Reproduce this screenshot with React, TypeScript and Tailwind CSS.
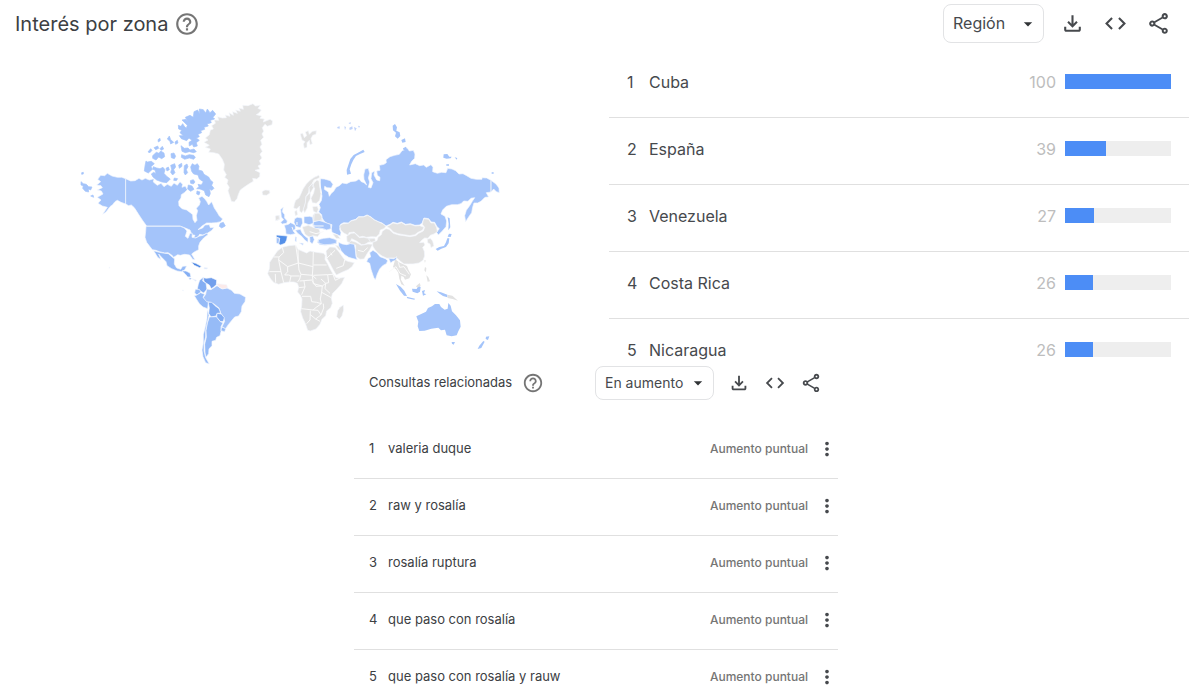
import { useState } from "react";
import {
  MdArrowDropDown,
  MdCode,
  MdHelpOutline,
  MdMoreVert,
  MdOutlineFileDownload,
  MdOutlineShare,
} from "react-icons/md";

const regions = [
  { name: "Cuba", value: 100 },
  { name: "España", value: 39 },
  { name: "Venezuela", value: 27 },
  { name: "Costa Rica", value: 26 },
  { name: "Nicaragua", value: 26 },
];

const queries = [
  "valeria duque",
  "raw y rosalía",
  "rosalía ruptura",
  "que paso con rosalía",
  "que paso con rosalía y rauw",
];

const LIGHT = "#a4c4fa";
const MEDIUM = "#96bbf7";
const STRONG = "#84aef3";
const SPAIN = "#5590e8";
const EMPTY = "#e2e2e2";
const COAST = "#f4f7fd";

// every tile has its own origin on the map, its paths are drawn at 3x
const tiles = [
  {
    id: "north-america",
    x: 70,
    y: 90,
    stroke: COAST,
    shapes: [
      // Alaska
      { fill: LIGHT, d: "M83 268L92 256L104 257L112 250L126 258L142 262L155 262L167 266V342L153 337L142 331L135 335L128 344L120 350L108 366L98 373L112 352L97 348L84 340L93 330L82 322L99 312L94 303L82 300L97 293L93 287L80 285L92 275Z" },
      // Canada
      { fill: LIGHT, d: "M167 266L182 273L195 272L207 265L216 270L226 265L238 270L252 266L250 276L262 286L273 280L282 290L292 283L304 289L312 279L322 286L330 275L338 283L336 292L346 288L352 299L343 308L334 314L333 324L326 334L327 347L336 356L350 360L361 368L368 374L369 388L375 398L381 391L379 377L383 362L379 355L388 345L391 335L386 324L396 319L404 326L410 334L416 345L425 335L429 344L433 354L441 366L448 378L458 387L452 395L439 398L424 399L410 399L396 408L384 419L398 414L405 405L418 404L421 413L432 412L426 421L412 430L399 435L389 433L384 441L370 446L375 436L366 434L360 420L348 415L338 411L330 408H230L219 393L209 378L200 364L193 353L184 345L176 347L167 342Z" },
    ],
  },
  {
    id: "arctic-islands",
    x: 70,
    y: 90,
    stroke: LIGHT,
    shapes: [
      { fill: LIGHT, d: "M33 275L40 281L49 283L56 290L66 291L62 300L55 297L56 306L46 304L38 295L40 288L33 285ZM35 248L40 247V252L35 253ZM62 318L69 315L71 322Z" },
      { fill: LIGHT, d: "M451 400L460 397L466 408L455 414L448 409ZM355 285L366 288L372 298L362 304L353 297ZM381 303L390 306L387 315L380 312Z" },
      { fill: LIGHT, d: "M228 213L232 216L244 214L253 221L243 230L247 238L235 249L223 243L225 228ZM250 230L260 234L270 236L279 232L285 239L282 250L289 258L301 267L290 278L276 276L260 270L249 261L244 252L251 247L258 251L255 240L248 238Z" },
      { fill: LIGHT, d: "M234 186L242 176L246 181L240 188ZM248 197L259 187L267 190L272 183L282 189L284 200L275 206L266 201L258 210L248 205ZM252 173L263 168L266 175L257 179ZM270 176L277 169L281 177L274 181ZM264 149L270 145L271 152L265 156ZM292 147L298 138L302 149L311 157L302 162L300 154ZM315 156L322 151L324 159L317 163Z" },
      { fill: LIGHT, d: "M303 191L312 189L317 199L313 206L304 203ZM288 235L295 231L298 239L291 243ZM302 226L314 221L317 231L311 239L315 248L308 255L302 247L305 238ZM313 264L323 266L319 272L311 271ZM326 225L335 220L336 229L328 235Z" },
      { fill: LIGHT, d: "M333 167L343 175L354 174L360 180L372 177L379 185L371 188L358 185L346 188L336 184ZM335 194L346 198L358 194L371 196L376 202L371 208L358 204L344 208L334 202Z" },
      { fill: LIGHT, d: "M325 106L333 109L338 101L343 109L349 115L352 106L345 99L336 90L348 88L354 95L346 82L360 76L370 82L372 65L383 60L389 71L388 57L400 59L407 69L412 57L420 68L428 61L437 72L429 82L434 87L421 91L424 98L411 102L415 108L402 112L404 118L392 122L395 128L384 133L388 140L379 144L388 151L379 158L382 168L371 171L367 163L358 168L357 157L366 151L357 144L350 152L334 146L328 137L340 137L330 128L335 121L326 117Z" },
      { fill: LIGHT, d: "M343 227L351 222L354 230L349 239L353 248L346 255L342 248ZM362 231L367 221L375 226L382 221L387 229L385 240L397 243L402 253L416 261L421 270L429 277L425 286L432 295L426 301L419 298L421 311L417 320L407 315L403 302L390 297L380 296L387 290L384 283L394 285L400 275L388 267L384 255L371 252L365 244ZM361 272L370 269L375 276L370 282L362 280Z" },
    ],
  },
  {
    id: "greenland",
    x: 180,
    y: 90,
    stroke: COAST,
    shapes: [
      { fill: EMPTY, d: "M72 157L84 150L76 144L88 134L91 120L100 117L95 107L106 100L103 90L116 91L113 80L127 84L139 83L136 75L150 79L147 68L160 76L158 65L172 70L167 60L181 64L177 54L190 58L188 46L204 47L219 41L226 48L241 46L234 55L244 60L237 69L229 74L245 78L240 85L253 87L250 96L270 88L278 93L276 104L262 109L255 103L247 113L251 124L246 132L251 142L242 151L246 163L240 171L247 184L240 193L246 204L238 212L243 223L234 228L240 237L225 241L240 248L239 260L230 267L218 265L220 274L205 283L192 292L181 300L176 311L171 326L163 336L154 334L149 318L144 302L148 292L141 281L144 270L134 262L139 254L131 240L133 223L127 208L116 192L101 188L86 187L91 177L76 172L88 166Z" },
      { fill: EMPTY, d: "M246 305L255 300L268 301L270 309L260 316L248 315ZM361 132L368 130L373 143L380 137L376 126L385 122L388 133L397 124L409 122L408 133L398 136L393 146L397 161L390 164L388 151L381 158L381 172L373 175L370 162L375 155L366 150Z" },
      // Scandinavia
      { fill: EMPTY, d: "M343 342L347 331L357 324L363 311L369 297L379 282L391 270L403 262L416 256L420 262L411 267L402 270L396 281L388 291L386 307L378 320L377 338L371 358L365 369L359 363L359 348L350 357L341 354Z" },
      { fill: EMPTY, d: "M402 279L411 270L417 273L419 289L423 311L419 331L409 340L397 338L393 325L401 309L404 294L397 289ZM370 359L376 339L378 320L389 309L387 292L398 280L402 291L391 309L391 326L384 339L382 354L374 369ZM398 350L412 349L415 358L411 369L400 364Z" },
      { fill: EMPTY, d: "M399 374L414 369L424 378L428 391L414 397L398 394ZM289 378L298 376L300 388L291 392ZM344 365L350 360L353 374L346 377Z" },
    ],
  },
  {
    id: "eurasia",
    x: 300,
    y: 100,
    stroke: COAST,
    shapes: [
      // Russia
      { fill: LIGHT, d: "M61 236L73 237L91 242L99 253L94 264L81 263L74 259L73 268L85 276L88 289L94 280L101 274L108 262L118 257L127 249L140 251L152 245L168 243L177 237L184 245L192 248L200 255L192 238L191 225L195 207L205 205L209 220L205 234L209 246L205 262L213 264L219 248L213 236L215 218L224 213L222 225L230 240L239 242L240 232L232 226L230 213L240 211L238 196L252 193L259 188L258 179L270 170L284 166L298 163L306 152L314 149L321 143L328 153L340 151L345 162L344 175L335 184L329 195L346 191L359 197L371 195L379 202L393 194L399 202L398 215L412 220L425 217L438 218L443 205L456 207L467 212L477 222L489 221L500 227L513 235L529 238L546 238L546 233L560 234L573 241L588 252L597 264L598 278L589 275L581 267L573 276L559 278L566 291L555 292L543 304L533 309L522 309L518 322L515 338L506 351L497 365L494 347L499 331L509 317L517 304L524 293L513 295L504 304L491 303L483 311L472 314L455 314L439 319L428 330L423 342L435 349L440 363L438 380L427 393L415 405L410 397L418 386L411 380L404 367L394 366L386 356L372 354L366 370L358 375L345 376L331 371L317 373L304 366L292 370L279 367L270 373L258 378L246 369L235 365L223 359L213 351L201 345L190 350L176 350L167 358L153 362L145 369L131 368L122 373L119 388L123 398L121 408L109 403L96 397L94 385L96 374L82 371L72 363L66 353L65 344L56 336L61 323L57 313L64 302L66 288L61 264Z" },
      // Kazakhstan and Central Asia
      { fill: EMPTY, d: "M119 377L129 371L145 370L153 363L168 359L176 351L190 351L203 346L213 352L223 360L236 366L248 371L258 379L252 386L241 390L238 402L229 411L215 410L200 412L187 409L179 411L162 396L147 398L145 406L131 399L122 390Z" },
      { fill: EMPTY, d: "M140 409L153 400L164 399L178 413L192 412L205 415L223 414L221 425L205 427L195 433L185 434L171 424L155 416L150 428L141 425Z" },
      { fill: EMPTY, d: "M145 431L153 422L166 426L184 436L204 432L218 433L209 450L202 460L192 477L180 478L169 470L167 452L167 435ZM206 417L225 415L226 425L212 427Z" },
      // Mongolia
      { fill: EMPTY, d: "M261 380L270 375L279 369L292 372L305 368L316 375L331 373L346 378L359 377L372 382L367 391L354 397L345 404L330 407L311 404L294 401L280 396L271 386Z" },
      // China
      { fill: EMPTY, d: "M218 427L231 422L234 412L244 404L247 394L258 386L267 388L280 400L296 405L311 407L330 410L347 407L356 400L370 393L374 382L367 373L371 356L386 358L393 369L403 369L410 383L412 395L402 402L391 406L384 415L374 414L365 421L359 428L371 427L375 435L368 442L373 454L374 468L369 481L357 489L339 492L325 492L312 492L304 486L291 475L276 474L261 475L246 468L233 458L225 449L218 438Z" },
      { fill: EMPTY, d: "M382 418L391 415L398 423L402 438L393 443L390 432L383 428Z" },
      // Turkey, Iran, India
      { fill: LIGHT, d: "M54 419L70 416L86 414L101 416L111 421L109 431L92 434L75 436L59 434L53 427Z" },
      { fill: LIGHT, d: "M116 427L127 432L140 434L151 431L163 433L166 449L168 470L172 479L156 475L146 472L134 464L124 453L116 442Z" },
      { fill: LIGHT, d: "M209 458L219 451L230 458L240 470L256 476L263 482L259 491L248 497L239 507L232 522L226 540L221 532L213 508L209 490L200 485L204 475L212 471Z" },
      { fill: LIGHT, d: "M266 475L282 476L290 470L288 481L278 484L272 489ZM38 368L54 365L67 365L81 371L94 375L92 386L78 390L65 386L50 386L39 379Z" },
    ],
  },
  {
    id: "eurasia-islands",
    x: 300,
    y: 100,
    stroke: "none",
    shapes: [
      { fill: LIGHT, d: "M141 224L140 210L146 192L151 177L161 165L174 158L190 149L194 156L180 162L168 168L160 180L154 193L149 208L153 221ZM278 77L285 72L291 82L289 92L299 97L301 108L293 116L285 109L288 98L279 91ZM304 120L315 115L317 126L307 128ZM309 145L318 140L321 149L311 151ZM431 163L442 162L448 170L455 170L452 175L440 176L430 173ZM464 172L472 174L470 179ZM439 193L447 193V197L439 197ZM575 217L581 217V221L575 221Z" },
      { fill: "#c0d3fa", d: "M112 81L119 79V86L112 85ZM133 79L138 81L135 91ZM145 69L153 67L151 73ZM148 83L157 79L158 87L149 90ZM162 81L170 85L165 94ZM174 77L180 79L177 84Z" },
      // Japan
      { fill: LIGHT, d: "M447 401L455 402L452 411L443 410ZM407 447L418 441L432 438L438 427L442 415L448 415L446 430L438 441L424 446L413 452ZM443 352L449 355L451 382L445 391L446 371Z" },
    ],
  },
  {
    id: "south-america",
    x: 70,
    y: 210,
    stroke: COAST,
    shapes: [
      // United States
      { fill: LIGHT, d: "M228 49H331L343 54L351 63L346 79L354 85L360 70L367 70L366 82L377 84L389 78L399 76L411 69L414 74L401 84L390 97L386 108L386 119L373 126L365 132L375 149L368 148L359 135L344 133L331 136L323 134L311 142L305 135L294 128L284 129L268 125L258 121L247 119L239 109L230 97L225 82L227 64Z" },
      // Mexico
      { fill: MEDIUM, d: "M251 122L268 127L284 130L295 131L304 139L314 147L313 162L320 174L332 178L338 169L350 168L344 180L334 185L321 183L305 176L291 167L288 155L275 142L266 132L273 149L263 142Z" },
      // Central America and Cuba
      { fill: STRONG, d: "M336 183L348 183L360 189L363 201L353 201L345 191ZM356 203L365 205L360 210Z" },
      { fill: "#4b86e2", d: "M364 157L377 160L394 169L389 173L373 166Z" },
      { fill: "#d8e4fb", d: "M367 206L380 211L376 214ZM403 172L414 174L411 177L402 177ZM117 171L120 173L118 175ZM337 241L340 240V243Z" },
      // Colombia, Venezuela, Ecuador, Peru
      { fill: STRONG, d: "M389 211L400 202L398 213L408 219L411 238L401 249L391 243L382 236L385 223Z" },
      { fill: "#729fec", d: "M400 203L409 205L424 203L440 210L439 224L430 232L424 236L418 225L408 219L402 214Z" },
      { fill: MEDIUM, d: "M376 238L388 238L393 246L381 255L374 249Z" },
      { fill: MEDIUM, d: "M379 256L392 248L404 253L399 262L409 271L415 277L413 296L399 291L388 281L379 267L373 257Z" },
      // Brazil
      { fill: LIGHT, d: "M410 237L423 239L441 227L455 236L471 234L485 241L493 250L510 252L527 262L525 275L516 288L514 305L506 318L494 321L484 333L475 344L466 357L456 350L464 334L461 323L452 309L447 294L432 282L421 277L410 275L400 263L407 253Z" },
      { fill: "#fbeaea", d: "M440 221L452 222L470 224L473 233L458 237L447 231Z" },
      { fill: STRONG, d: "M415 277L425 277L435 287L447 296L452 309L442 310L438 318L423 321L416 310L418 294Z" },
      { fill: STRONG, d: "M441 310L454 312L463 323L460 334L452 335L440 322Z" },
      // Argentina, Uruguay, Chile
      { fill: MEDIUM, d: "M418 321L439 320L451 335L459 338L453 350L453 365L450 377L440 382L437 391L426 394L426 407L417 417L416 431L407 443L405 426L404 403L409 382L408 361L412 340Z" },
      { fill: MEDIUM, d: "M455 351L467 356L464 365L453 362ZM412 299L417 316L411 341L407 361L407 381L402 400L402 423L407 443L418 462L407 458L399 440L396 420L400 398L400 374L406 350L411 325Z" },
    ],
  },
  {
    id: "africa",
    x: 250,
    y: 180,
    stroke: COAST,
    shapes: [
      // Africa
      { fill: EMPTY, d: "M82 213L97 202L116 197L137 195L144 208L158 214L170 219L180 213L194 216L221 220L226 226L225 238L232 250L241 268L249 282L258 293L270 294L284 292L275 311L261 327L248 340L244 353L247 370L242 383L230 393L227 407L216 418L210 433L198 447L181 453L173 451L167 433L158 414L152 395L155 376L156 357L151 346L143 336L146 321L142 310L132 306L119 306L102 308L86 313L72 308L62 297L53 281L58 266L59 247L70 231Z" },
      { fill: EMPTY, d: "M270 382L280 375L281 390L276 408L268 418L260 410L263 392Z" },
      // Arabia
      { fill: EMPTY, d: "M228 213L239 201L255 202L265 213L277 230L285 240L293 244L313 248L306 260L294 269L276 277L259 285L250 270L240 251L231 235Z" },
      { fill: EMPTY, d: "M256 196L266 198L272 208L268 211Z" },
      // Western Europe
      { fill: LIGHT, d: "M103 136L115 133L122 128L136 135L136 146L130 153L136 161L122 164L108 162L107 150ZM92 88L100 82L97 95L104 104L104 114L112 123L110 130L97 132L92 127L101 119L94 111ZM134 116L142 112L156 114L158 129L151 143L137 139L132 127ZM162 110L179 109L188 112L190 130L177 134L162 129Z" },
      { fill: LIGHT, d: "M136 151L151 148L156 158L164 168L174 175L174 187L165 181L155 169L143 160ZM148 189L160 190L159 196ZM179 169L189 168L193 179L187 192L180 185ZM190 126L206 121L225 127L241 133L243 146L230 150L220 146L207 144L193 146ZM205 179L221 175L239 173L258 179L260 189L243 193L222 194L207 190Z" },
      { fill: SPAIN, d: "M79 165L112 168L110 180L105 190L92 195L86 192L89 175L79 172Z" },
      { fill: LIGHT, d: "M79 173L89 175L86 192L79 189ZM136 170L140 172L139 185L135 183Z" },
      { fill: EMPTY, d: "M157 141L175 136L192 143L207 147L211 159L203 170L189 167L177 171L165 163ZM193 100L208 100L216 111L213 121L191 124ZM76 108L87 106L88 117L77 122ZM248 161L262 164L271 176L258 175Z" },
    ],
  },
  {
    id: "oceania",
    x: 340,
    y: 200,
    stroke: "none",
    shapes: [
      { fill: LIGHT, d: "M229 349L242 343L258 335L264 324L276 319L285 312L298 312L303 321L314 329L323 326L325 309L332 317L336 334L348 346L360 361L362 380L355 394L350 406L335 409L320 406L315 389L303 391L295 383L274 386L254 392L238 393L233 379L235 365Z" },
      { fill: LIGHT, d: "M335 426L345 426L341 434L336 431ZM438 410L448 409L444 420L437 417ZM430 423L434 425L424 444L413 447L418 437ZM168 252L182 260L193 272L201 288L192 287L180 272ZM216 266L230 267L235 257L242 261L240 275L232 280L218 275ZM246 273L255 270L252 280L259 283L249 287ZM200 290L225 296L223 299L202 295ZM290 274L303 277L322 284L322 292L309 288L299 281Z" },
      { fill: EMPTY, d: "M322 284L337 287L354 302L338 297L323 294ZM228 259L239 249L242 257L232 263ZM255 201L259 204L258 217L253 211ZM259 226L265 232L270 244L263 245ZM253 181L257 181L255 189Z" },
      // Indochina
      { fill: EMPTY, d: "M166 178L177 187L188 192L201 198L206 211L213 223L208 235L195 239L191 231L184 227L183 239L194 258L184 253L178 236L175 218L168 208L159 201Z" },
    ],
  },
];

// inner borders of Africa and of other grey areas
const borders = [
  { id: "africa", x: 250, y: 180, d: "M97 202L101 218L87 231L86 240M87 231H71M86 240L113 260L145 249L137 195M144 208L145 249L189 260L190 216M190 255H230M189 260L187 286L199 297M145 249L147 270L153 283L149 297L143 306M113 260L113 275L104 285L116 285L123 288L119 306M86 240L93 275L58 275M93 275L101 308M76 282L77 308M123 288H149M153 283L187 286M149 303L187 300M187 286L190 311L217 318L227 310L236 308L233 284L190 286M162 303L165 321L146 323M165 321L155 344M187 303L198 319L217 318L215 336L211 357L214 371L200 367L185 365L182 349H156M227 310L225 326L240 340M215 337L244 353M154 386L189 390L200 381L214 371M181 392L180 420L170 431M181 404L197 417L213 405L204 391L189 390M213 405L221 384L220 371M197 417L210 424M233 284L249 283L256 301L270 294M213 297L227 310M230 235L255 211M284 240L280 257L259 265" },
  { id: "eurasia", x: 300, y: 100, d: "M573 241V276M92 458L96 466M174 451L190 455L203 443M268 515L288 500L300 520L318 528M295 487L299 502L312 500L328 523" },
  { id: "scandinavia", x: 180, y: 90, d: "M420 257L419 278L425 311M398 281L407 268M397 408H431M389 425L408 431L431 425M351 396V405M336 411L341 424" },
];

const WorldMap = () => (
  <svg viewBox="80 100 424 266" className="w-full max-w-[424px]" role="img" aria-label="Mapa del mundo">
    {tiles.map((tile) => (
      <g
        key={tile.id}
        transform={`translate(${tile.x} ${tile.y}) scale(0.3333)`}
        stroke={tile.stroke}
        strokeWidth="2"
        strokeLinejoin="round"
      >
        {tile.shapes.map((shape, index) => (
          <path key={index} fill={shape.fill} d={shape.d} />
        ))}
      </g>
    ))}
    {borders.map((border) => (
      <path
        key={border.id}
        transform={`translate(${border.x} ${border.y}) scale(0.3333)`}
        fill="none"
        stroke="#fafafa"
        strokeWidth="3"
        strokeLinejoin="round"
        d={border.d}
      />
    ))}
  </svg>
);

type DropdownProps = {
  label: string;
  options: string[];
  className: string;
};

const Dropdown = ({ label, options, className }: DropdownProps) => {
  const [value, setValue] = useState(options[0]);
  return (
    <div className="relative">
      <select
        aria-label={label}
        value={value}
        onChange={(e) => setValue(e.target.value)}
        className={`appearance-none rounded-lg border border-[#e2e3e5] bg-white pb-0.5 pl-[9px] text-[#46494d] ${className}`}
      >
        {options.map((option) => (
          <option key={option}>{option}</option>
        ))}
      </select>
      <MdArrowDropDown className="pointer-events-none absolute right-1.5 top-1/2 size-5 -translate-y-1/2 text-[#303336]" />
    </div>
  );
};

const Actions = ({ className }: { className: string }) => (
  <div className={`flex items-center text-[#46494d] ${className}`}>
    <button aria-label="Descargar">
      <MdOutlineFileDownload />
    </button>
    <button aria-label="Insertar">
      <MdCode />
    </button>
    <button aria-label="Compartir">
      <MdOutlineShare />
    </button>
  </div>
);

const InterestByRegion = () => (
  <section className="pr-[11px]">
    <div className="flex h-[51px] items-center justify-between pb-1 pl-[15px] pr-[18px]">
      <div className="flex items-center gap-1.5">
        <h2 className="text-[20px] text-[#3c4043]">Interés por zona</h2>
        <button aria-label="Ayuda">
          <MdHelpOutline className="size-[26px] text-[#757575]" />
        </button>
      </div>
      <div className="flex items-center gap-4">
        <Dropdown label="Zona" options={["Región", "Ciudad"]} className="h-[39px] w-[101px] text-[16px]" />
        <Actions className="gap-[18px] text-[25px]" />
      </div>
    </div>

    <div className="grid grid-cols-[21fr_20fr]">
      <div className="flex items-end pl-20">
        <WorldMap />
      </div>
      <ol className="h-[315px] overflow-hidden">
        {regions.map((region, index) => (
          <li
            key={region.name}
            className="flex h-[67px] items-center border-b border-[#e0e0e0] pb-[5px] pl-[18px] pr-[18px] text-[16px] text-[#46494d]"
          >
            <span className="w-[22px]">{index + 1}</span>
            <span className="flex-1">{region.name}</span>
            <span className="mr-[9px] text-[#bdbdbd]">{region.value}</span>
            <div className="h-[15px] w-[106px] bg-[#eeeeee]">
              <div className="h-full bg-[#4c8df6]" style={{ width: `${region.value}%` }} />
            </div>
          </li>
        ))}
      </ol>
    </div>
  </section>
);

const RelatedQueries = () => (
  <section className="pr-2">
    <div className="mx-auto max-w-[484px]">
      <div className="flex h-[34px] items-center justify-between pl-[15px] pr-4">
        <div className="flex items-center gap-2.5">
          <h2 className="text-[13px] text-[#3c4043]">Consultas relacionadas</h2>
          <button aria-label="Ayuda">
            <MdHelpOutline className="size-[22px] text-[#757575]" />
          </button>
        </div>
        <div className="flex items-center gap-3.5">
          <Dropdown label="Orden" options={["En aumento", "Principales"]} className="h-[34px] w-[119px] text-[14px]" />
          <Actions className="gap-3.5 text-[22px]" />
        </div>
      </div>

      <ol className="mt-[22px]">
        {queries.map((query, index) => (
          <li
            key={query}
            className="flex h-[57px] items-center border-b border-[#e0e0e0] pb-0.5 pl-[15px] text-[13px] text-[#3c4043]"
          >
            <span className="w-[19px]">{index + 1}</span>
            <span className="flex-1">{query}</span>
            <span className="mr-2 text-[12px] font-medium text-[#757575]">Aumento puntual</span>
            <button aria-label={`Más opciones de ${query}`}>
              <MdMoreVert className="size-[22px] text-[#46494d]" />
            </button>
          </li>
        ))}
      </ol>
    </div>
  </section>
);

const App = () => {
  return (
    <main className="h-screen overflow-hidden bg-white font-[Inter,sans-serif]">
      <InterestByRegion />
      <RelatedQueries />
    </main>
  );
};

export default App;
